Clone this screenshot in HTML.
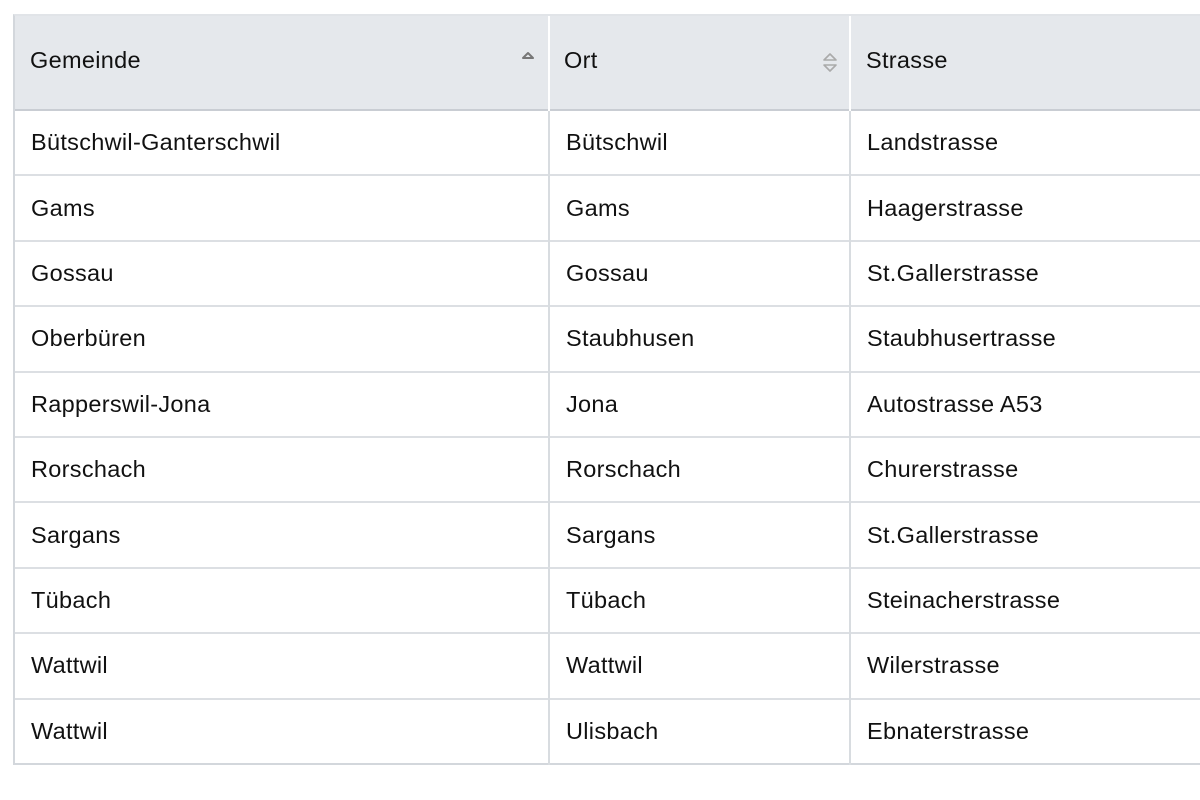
<html><head><style>
body{margin:0;background:#fff;font-family:"Liberation Sans",Arial,sans-serif;}
.t{position:absolute;left:13px;top:14px;width:1200px;border-left:2px solid #d3d7dc;border-top:2px solid #e1e4e8;}
.h{height:93px;background:#e5e8ec;border-bottom:2px solid #c9cdd3;position:relative;}
.r{height:63.4px;border-bottom:2px solid #dcdfe3;position:relative;}
.r:last-child{border-bottom:2px solid #d3d7dc;}
.c{position:absolute;top:0;height:100%;display:flex;align-items:center;font-size:23.5px;color:#111;letter-spacing:0.3px}
.c1{left:16px}.c2{left:551px}.c3{left:852px}
.h .c{top:-2px}
.v{position:absolute;top:0;bottom:-2px;width:2px;background:#d8dce0}
.h .v{background:#fff}
</style></head><body>
<div class="t">
<div class="h"><div class="c" style="left:15px">Gemeinde</div><div class="v" style="left:533px"></div><div class="c" style="left:549px">Ort</div><div class="v" style="left:834px"></div><div class="c" style="left:851px">Strasse</div>
<svg style="position:absolute;left:505px;top:34px" width="16" height="12"><path d="M3 8L8 3L13 8Z" fill="none" stroke="#777" stroke-width="2" stroke-linejoin="round"/></svg>
<svg style="position:absolute;left:806px;top:35px" width="18" height="24"><path d="M3 9L9 3L15 9Z" fill="none" stroke="#aaa" stroke-width="1.6" stroke-linejoin="round"/><path d="M3 14L9 20L15 14Z" fill="none" stroke="#aaa" stroke-width="1.6" stroke-linejoin="round"/></svg>
</div>
<div class="r"><div class="c c1">Bütschwil-Ganterschwil</div><div class="v" style="left:533px"></div><div class="c c2">Bütschwil</div><div class="v" style="left:834px"></div><div class="c c3">Landstrasse</div></div>
<div class="r"><div class="c c1">Gams</div><div class="v" style="left:533px"></div><div class="c c2">Gams</div><div class="v" style="left:834px"></div><div class="c c3">Haagerstrasse</div></div>
<div class="r"><div class="c c1">Gossau</div><div class="v" style="left:533px"></div><div class="c c2">Gossau</div><div class="v" style="left:834px"></div><div class="c c3">St.Gallerstrasse</div></div>
<div class="r"><div class="c c1">Oberbüren</div><div class="v" style="left:533px"></div><div class="c c2">Staubhusen</div><div class="v" style="left:834px"></div><div class="c c3">Staubhusertrasse</div></div>
<div class="r"><div class="c c1">Rapperswil-Jona</div><div class="v" style="left:533px"></div><div class="c c2">Jona</div><div class="v" style="left:834px"></div><div class="c c3">Autostrasse A53</div></div>
<div class="r"><div class="c c1">Rorschach</div><div class="v" style="left:533px"></div><div class="c c2">Rorschach</div><div class="v" style="left:834px"></div><div class="c c3">Churerstrasse</div></div>
<div class="r"><div class="c c1">Sargans</div><div class="v" style="left:533px"></div><div class="c c2">Sargans</div><div class="v" style="left:834px"></div><div class="c c3">St.Gallerstrasse</div></div>
<div class="r"><div class="c c1">Tübach</div><div class="v" style="left:533px"></div><div class="c c2">Tübach</div><div class="v" style="left:834px"></div><div class="c c3">Steinacherstrasse</div></div>
<div class="r"><div class="c c1">Wattwil</div><div class="v" style="left:533px"></div><div class="c c2">Wattwil</div><div class="v" style="left:834px"></div><div class="c c3">Wilerstrasse</div></div>
<div class="r"><div class="c c1">Wattwil</div><div class="v" style="left:533px"></div><div class="c c2">Ulisbach</div><div class="v" style="left:834px"></div><div class="c c3">Ebnaterstrasse</div></div>
</div>
</body></html>
